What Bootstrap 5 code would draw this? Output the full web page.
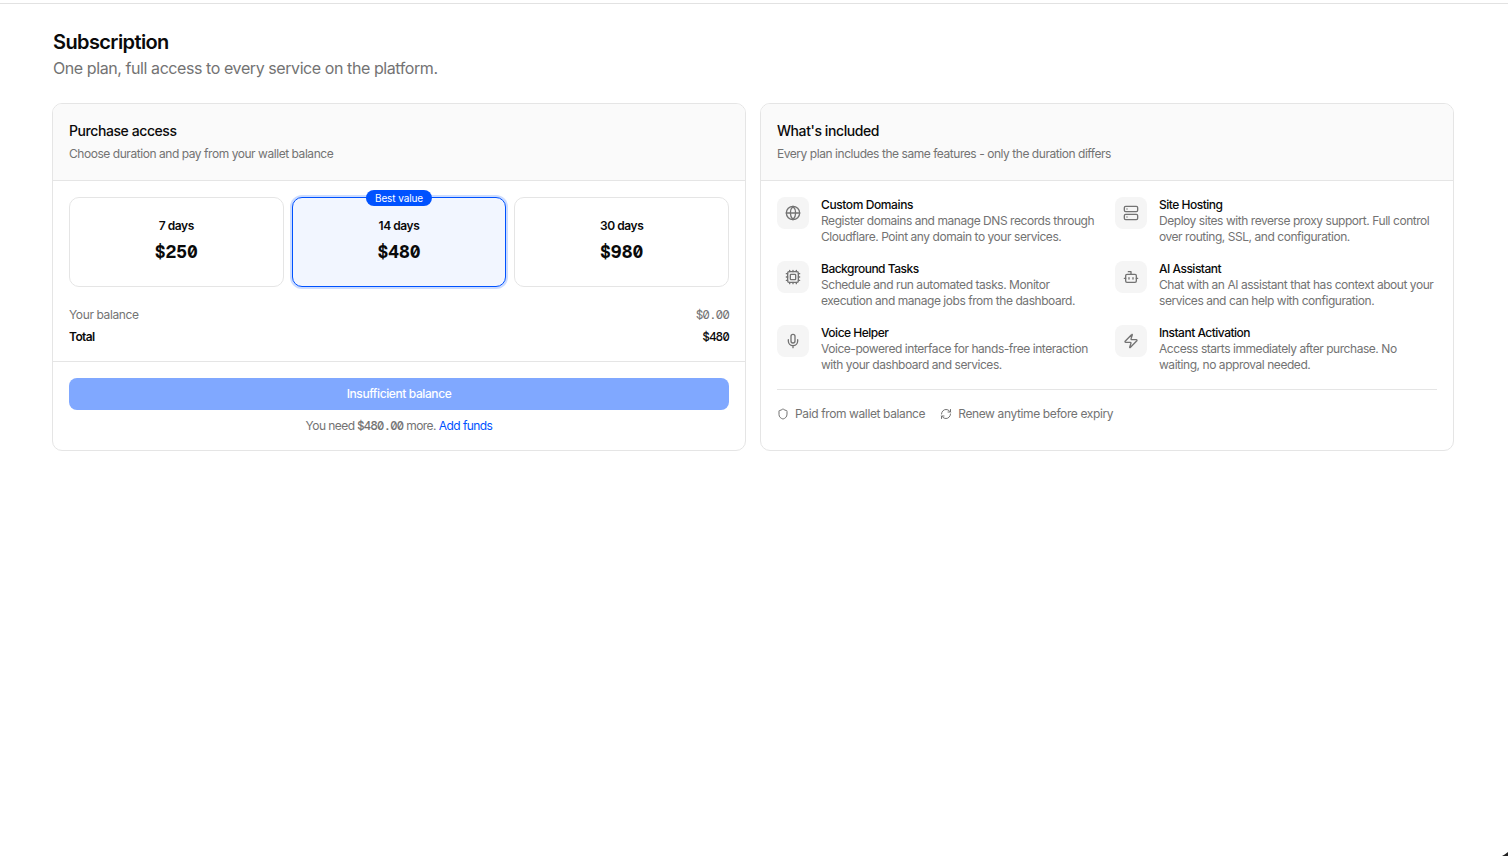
<!DOCTYPE html>
<html lang="en">
<head>
<meta charset="utf-8">
<meta name="viewport" content="width=device-width, initial-scale=1">
<title>Subscription</title>
<link href="https://cdn.jsdelivr.net/npm/bootstrap@5.3.0/dist/css/bootstrap.min.css" rel="stylesheet">
<style>
body{font-family:Inter,sans-serif;font-size:12px;line-height:16px;letter-spacing:-.45px;color:#0a0a0a;background:#fff;overflow:hidden;height:856px;text-rendering:optimizeSpeed}
a{color:#0052ff;text-decoration:none}
.topline{height:4px;border-bottom:1px solid #e2e2e2}
.page-wrap{padding:24px 54px 0 52px}
.page-title{font-size:20px;line-height:28px;font-weight:600;letter-spacing:-.6px;margin:0 0 0 1px}
.page-sub{font-size:16px;line-height:24px;letter-spacing:-.42px;margin:0 0 0 1px}
.soft{color:#737373}
.panels{display:grid;grid-template-columns:1fr 1fr;gap:14px;margin-top:23px}
.panel{border:1px solid #e5e5e5;border-radius:10px;overflow:hidden;height:348px}
.panel-head{background:#fafafa;border-bottom:1px solid #e5e5e5;height:77px;padding:16px}
.panel-head h2{font-size:14px;line-height:22px;font-weight:500;margin:0 0 4px;letter-spacing:-.42px}
.plans{display:grid;grid-template-columns:repeat(3,1fr);gap:8px}
.plan{border:1px solid #e5e5e5;border-radius:10px;height:90px;padding-top:20px;text-align:center;font-weight:600}
.plan.picked{border-color:#0052ff;background:#f2f6ff;box-shadow:0 0 0 2px #ccdcff}
.num{font-family:"Geist Mono","Roboto Mono",monospace;letter-spacing:-.6px}
.price{font-size:18px;line-height:28px;font-weight:700;margin-top:4px;letter-spacing:0}
.best{top:-8px;background:#0052ff;color:#fff;border-radius:8px;font-size:10px;font-weight:400;padding:0 9px;height:16px;white-space:nowrap;letter-spacing:-.1px}
.balance-row{margin-top:20px;letter-spacing:-.38px}
.total-row{margin-top:6px;font-weight:600;letter-spacing:-.6px}
.total-row .num{font-weight:500}
.buy{height:32px;border-radius:8px;background:#80a8ff;color:#fff;font-weight:500;letter-spacing:-.4px}
.foot{border-top:1px solid #e5e5e5;padding:16px}
.need{letter-spacing:-.56px}
.feats{display:grid;grid-template-columns:1fr 1fr;gap:16px}
.feat{display:flex;gap:12px}
.tile{width:32px;height:32px;border-radius:8px;background:#f5f5f5;flex:none}
svg{fill:none;stroke:#737373;stroke-width:2;stroke-linecap:round;stroke-linejoin:round;flex:none}
.tile svg{width:16px;height:16px}
.fname{font-weight:500;letter-spacing:-.5px}
.feat:first-child .fname{letter-spacing:-.4px}
.notes{border-top:1px solid #e5e5e5;margin-top:16px;padding-top:16px;gap:15px;letter-spacing:-.38px}
.notes svg{width:12px;height:12px}
.notes span{gap:6px}
.corner{width:6px;height:4px;right:0;bottom:0;background:#222;clip-path:polygon(0 100%,45% 60%,100% 0,100% 100%)}
</style>
</head>
<body>
<div class="topline"></div>
<main class="page-wrap">
<h1 class="page-title">Subscription</h1>
<p class="page-sub soft">One plan, full access to every service on the platform.</p>
<div class="panels">
<section class="panel">
<div class="panel-head"><h2>Purchase access</h2><div class="soft">Choose duration and pay from your wallet balance</div></div>
<div class="p-3">
<div class="plans">
<div class="plan"><div>7 days</div><div class="price num">$250</div></div>
<div class="plan picked position-relative"><span class="best position-absolute start-50 translate-middle-x">Best value</span><div>14 days</div><div class="price num">$480</div></div>
<div class="plan"><div>30 days</div><div class="price num">$980</div></div>
</div>
<div class="balance-row d-flex justify-content-between soft"><span>Your balance</span><span class="num">$0.00</span></div>
<div class="total-row d-flex justify-content-between"><span>Total</span><span class="num">$480</span></div>
</div>
<div class="foot">
<div class="buy d-flex align-items-center justify-content-center">Insufficient balance</div>
<div class="need text-center soft mt-2">You need <span class="num fw-medium">$480.00</span> more. <a href="#">Add funds</a></div>
</div>
</section>
<section class="panel">
<div class="panel-head"><h2>What's included</h2><div class="soft">Every plan includes the same features - only the duration differs</div></div>
<div class="p-3">
<div class="feats">
<div class="feat"><div class="tile d-flex align-items-center justify-content-center"><svg viewBox="0 0 24 24"><circle cx="12" cy="12" r="10"/><path d="M12 2a14.5 14.5 0 0 0 0 20 14.5 14.5 0 0 0 0-20M2 12h20"/></svg></div><div><div class="fname">Custom Domains</div><div class="soft">Register domains and manage DNS records through<br>Cloudflare. Point any domain to your services.</div></div></div>
<div class="feat"><div class="tile d-flex align-items-center justify-content-center"><svg viewBox="0 0 24 24"><rect x="2" y="2" width="20" height="8" rx="2"/><rect x="2" y="14" width="20" height="8" rx="2"/><path d="M6 6h.01M6 18h.01"/></svg></div><div><div class="fname">Site Hosting</div><div class="soft">Deploy sites with reverse proxy support. Full control<br>over routing, SSL, and configuration.</div></div></div>
<div class="feat"><div class="tile d-flex align-items-center justify-content-center"><svg viewBox="0 0 24 24"><rect x="4" y="4" width="16" height="16" rx="2"/><rect x="8" y="8" width="8" height="8" rx="1"/><path d="M12 20v2M12 2v2M17 20v2M17 2v2M2 12h2M2 17h2M2 7h2M20 12h2M20 17h2M20 7h2M7 20v2M7 2v2"/></svg></div><div><div class="fname">Background Tasks</div><div class="soft">Schedule and run automated tasks. Monitor<br>execution and manage jobs from the dashboard.</div></div></div>
<div class="feat"><div class="tile d-flex align-items-center justify-content-center"><svg viewBox="0 0 24 24"><path d="M12 8V4H8"/><rect x="4" y="8" width="16" height="12" rx="2"/><path d="M2 14h2M20 14h2M15 13v2M9 13v2"/></svg></div><div><div class="fname">AI Assistant</div><div class="soft">Chat with an AI assistant that has context about your<br>services and can help with configuration.</div></div></div>
<div class="feat"><div class="tile d-flex align-items-center justify-content-center"><svg viewBox="0 0 24 24"><path d="M12 19v3M19 10v2a7 7 0 0 1-14 0v-2"/><rect x="9" y="2" width="6" height="13" rx="3"/></svg></div><div><div class="fname">Voice Helper</div><div class="soft">Voice-powered interface for hands-free interaction<br>with your dashboard and services.</div></div></div>
<div class="feat"><div class="tile d-flex align-items-center justify-content-center"><svg viewBox="0 0 24 24"><path d="M4 14a1 1 0 0 1-.78-1.63l9.9-10.2a.5.5 0 0 1 .86.46l-1.92 6.02A1 1 0 0 0 13 10h7a1 1 0 0 1 .78 1.63l-9.9 10.2a.5.5 0 0 1-.86-.46l1.92-6.02A1 1 0 0 0 11 14z"/></svg></div><div><div class="fname">Instant Activation</div><div class="soft">Access starts immediately after purchase. No<br>waiting, no approval needed.</div></div></div>
</div>
<div class="notes d-flex soft">
<span class="d-flex align-items-center"><svg viewBox="0 0 24 24"><path d="M20 13c0 5-3.5 7.5-7.66 8.95a1 1 0 0 1-.67-.01C7.5 20.5 4 18 4 13V6a1 1 0 0 1 1-1c2 0 4.5-1.2 6.24-2.72a1.17 1.17 0 0 1 1.52 0C14.51 3.81 17 5 19 5a1 1 0 0 1 1 1z"/></svg>Paid from wallet balance</span>
<span class="d-flex align-items-center"><svg viewBox="0 0 24 24"><path d="M3 12a9 9 0 0 1 9-9 9.75 9.75 0 0 1 6.74 2.74L21 8M21 3v5h-5M21 12a9 9 0 0 1-9 9 9.75 9.75 0 0 1-6.74-2.74L3 16M8 16H3v5"/></svg>Renew anytime before expiry</span>
</div>
</div>
</section>
</div>
</main>
<div class="corner position-absolute"></div>
<script src="https://cdn.jsdelivr.net/npm/bootstrap@5.3.0/dist/js/bootstrap.bundle.min.js"></script>
</body>
</html>
